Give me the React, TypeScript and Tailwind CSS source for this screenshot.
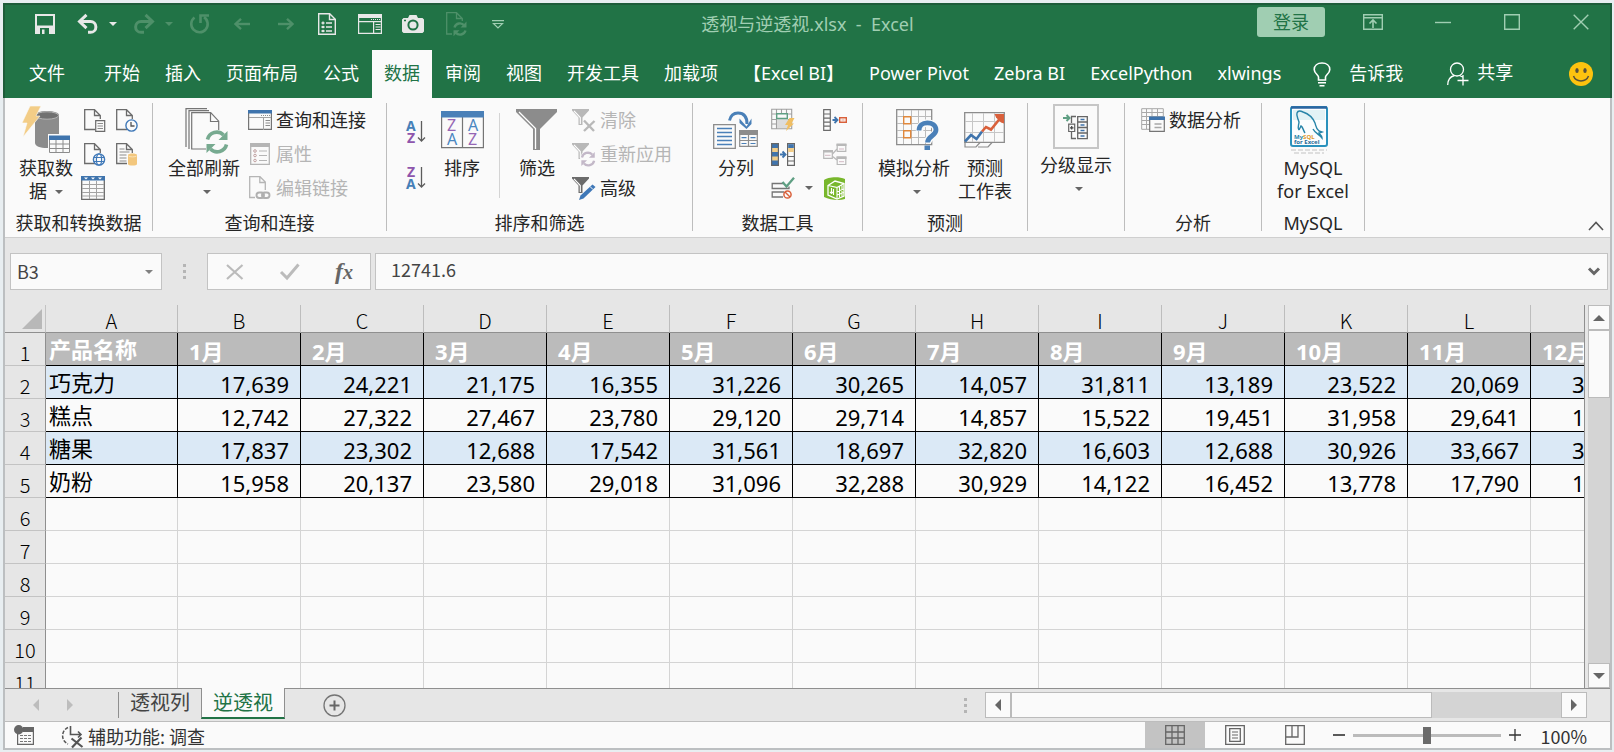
import React from 'react'

const TABS = [
  '文件', '开始', '插入', '页面布局', '公式', '数据', '审阅', '视图', '开发工具', '加载项',
  '【Excel BI】', 'Power Pivot', 'Zebra BI', 'ExcelPython', 'xlwings',
]

const COLUMNS = ['A', 'B', 'C', 'D', 'E', 'F', 'G', 'H', 'I', 'J', 'K', 'L', 'M']
const MONTHS = ['1月', '2月', '3月', '4月', '5月', '6月', '7月', '8月', '9月', '10月', '11月', '12月']

const PRODUCTS = [
  { name: '巧克力', values: ['17,639', '24,221', '21,175', '16,355', '31,226', '30,265', '14,057', '31,811', '13,189', '23,522', '20,069'], last: '3' },
  { name: '糕点', values: ['12,742', '27,322', '27,467', '23,780', '29,120', '29,714', '14,857', '15,522', '19,451', '31,958', '29,641'], last: '1' },
  { name: '糖果', values: ['17,837', '23,302', '12,688', '17,542', '31,561', '18,697', '32,820', '16,603', '12,688', '30,926', '33,667'], last: '3' },
  { name: '奶粉', values: ['15,958', '20,137', '23,580', '29,018', '31,096', '32,288', '30,929', '14,122', '16,452', '13,778', '17,790'], last: '1' },
]

const EMPTY_ROWS = [6, 7, 8, 9, 10, 11]

interface IconProps {
  w: number
  h: number
  className?: string
  children: React.ReactNode
}

function Icon({ w, h, className, children }: IconProps) {
  return (
    <svg width={w} height={h} viewBox={`0 0 ${w} ${h}`} fill="none" className={`shrink-0 overflow-visible ${className || ''}`} aria-hidden="true">
      {children}
    </svg>
  )
}

function Caret({ className = 'text-[#666]' }: { className?: string }) {
  return (
    <Icon w={8} h={4} className={className}>
      <path d="M0 0h8L4 4z" fill="currentColor" />
    </Icon>
  )
}

/* ---------- title bar icons ---------- */

const SaveIcon = () => (
  <Icon w={20} h={20}>
    <path d="M0 0h20v20H0z M2 2v9.500h16V2z" fill="currentColor" fillRule="evenodd" />
    <path d="M5 14h9v6H5z" fill="#217346" />
    <path d="M7 15.500h2.500V20H7z" fill="currentColor" />
  </Icon>
)

const UndoIcon = () => (
  <Icon w={22} h={20}>
    <path d="M2 7.500h11.500a5.300 5.300 0 0 1 0 10.800H11" stroke="currentColor" strokeWidth="3" />
    <path d="M9.500 .8L2.500 7.500l7 6.700" stroke="currentColor" strokeWidth="3" />
  </Icon>
)

const RedoIcon = () => (
  <Icon w={22} h={20}>
    <path d="M20 7.500H8a5.300 5.300 0 0 0 0 10.800h3" stroke="currentColor" strokeWidth="3" />
    <path d="M12.500 .8l7 6.700-7 6.700" stroke="currentColor" strokeWidth="3" />
  </Icon>
)

const RepeatIcon = () => (
  <Icon w={21} h={20}>
    <path d="M5.500 3.500A8.200 8.200 0 1 0 15 3.200" stroke="currentColor" strokeWidth="2.600" />
    <path d="M11.500 9V1.500H20" stroke="currentColor" strokeWidth="2.600" />
  </Icon>
)

const ArrowIcon = ({ flip }: { flip?: boolean }) => (
  <Icon w={16} h={12} className={flip ? 'rotate-180' : ''}>
    <path d="M2 6h14" stroke="currentColor" strokeWidth="2.400" />
    <path d="M7 .8L1.500 6 7 11.200" stroke="currentColor" strokeWidth="2.400" />
  </Icon>
)

const ListDocIcon = () => (
  <Icon w={18} h={22}>
    <path d="M.7 .7h11l5.600 5.600v15H.7z M11.500 1v5.500H17" stroke="currentColor" strokeWidth="1.400" />
    <path d="M3.500 10h3M5 8.500v3M3.500 14h3M3.500 18h3M8 10h6M8 14h6M8 18h6" stroke="currentColor" strokeWidth="1.300" />
    <path d="M5 12.500l1.500 1.500L5 15.500 3.500 14zM5 16.500L6.500 18 5 19.500 3.500 18z" fill="currentColor" />
  </Icon>
)

const PaneTitleIcon = () => (
  <Icon w={24} h={20}>
    <path d="M.6 .6h22.800v18.800H.6z" stroke="currentColor" strokeWidth="1.200" />
    <path d="M0 0h24v4H0zM1 7h22v1.200H1zM15 8h1.200v12H15z" fill="currentColor" />
    <path d="M13 5.500h9" stroke="currentColor" strokeWidth="1.200" strokeDasharray="1 1" />
    <path d="M17.500 10.500h5M17.500 13h5M17.500 15.500h5" stroke="currentColor" strokeWidth="1.200" />
  </Icon>
)

const CameraIcon = () => (
  <Icon w={22} h={18}>
    <path d="M1.500 3H6l1.500-3h7L16 3h4.500L22 4.500v12L20.500 18h-19L0 16.500v-12z" fill="currentColor" />
    <circle cx="11" cy="10" r="4.600" stroke="#217346" strokeWidth="2" />
    <path d="M2 5.500h2" stroke="#217346" strokeWidth="1.500" />
  </Icon>
)

const RefreshDocIcon = () => (
  <Icon w={22} h={24}>
    <path d="M6 22H.7V.7h9.800l5.800 5.800V9M10.500 1v5.500H16" stroke="currentColor" strokeWidth="1.300" />
    <path d="M8.500 15.500a5.600 5.600 0 0 1 9.800-2M19.500 18.500a5.600 5.600 0 0 1-9.800 2" stroke="currentColor" strokeWidth="2.400" />
    <path d="M20.500 9.500v6h-6zM7.500 24.200v-6h6z" fill="currentColor" />
  </Icon>
)

const CustomizeIcon = () => (
  <Icon w={12} h={9}>
    <path d="M0 .7h12M1.500 3.500h9L6 8z" stroke="currentColor" strokeWidth="1.200" />
  </Icon>
)

const RibbonDisplayIcon = () => (
  <Icon w={20} h={16}>
    <path d="M.7 .7h18.600v14.600H.7zM1 3.700h18" stroke="currentColor" strokeWidth="1.400" />
    <path d="M10 14V6.500M6.500 9.500L10 6l3.500 3.500" stroke="currentColor" strokeWidth="1.600" />
  </Icon>
)

/* ---------- ribbon icons ---------- */

const GetDataIcon = () => (
  <Icon w={48} h={48}>
    <path d="M13 9c0-2.300 5-4 12-4s12 1.700 12 4v28c0 3-5 5-12 5s-12-2-12-5z" fill="#8c8c8c" />
    <ellipse cx="25" cy="9.500" rx="11.500" ry="3.700" fill="#717171" stroke="#b3b3b3" />
    <path d="M8 0h11l-5 10h4L1 31l4-14H0z" fill="#f3cd87" stroke="#fafafa" strokeWidth=".6" />
    <path d="M26 28h23v21H26z" fill="#fafafa" />
    <path d="M27.500 33.500h20v13h-20zM27.500 38h20M27.500 42.500h20M34 33v14M41 33v14" stroke="#8c8c8c" />
    <path d="M27 29.500h21v4.500H27z" fill="#3f74ad" />
  </Icon>
)

const DocBase = () => (
  <path d="M11 20.500H.7V.7h9.800l5.800 5.800V10M10.500 1v5.500H16" stroke="#6b6b6b" strokeWidth="1.300" />
)

const TextDocIcon = () => (
  <Icon w={22} h={23}>
    <DocBase />
    <path d="M11.700 11.700h9v10.600h-9z" fill="#fafafa" stroke="#6b6b6b" strokeWidth="1.200" />
    <path d="M13.500 14.500h5.500M13.500 17h5.500M13.500 19.500h5.500" stroke="#8c8c8c" />
  </Icon>
)

const RecentDocIcon = () => (
  <Icon w={22} h={23}>
    <DocBase />
    <circle cx="15.500" cy="16.500" r="5.600" fill="#fafafa" stroke="#3f78b8" strokeWidth="1.400" />
    <path d="M15 13v4h3.500" stroke="#555" strokeWidth="1.300" />
  </Icon>
)

const WebDocIcon = () => (
  <Icon w={22} h={23}>
    <DocBase />
    <circle cx="15" cy="16.500" r="5.600" fill="#fafafa" stroke="#3f78b8" strokeWidth="1.400" />
    <ellipse cx="15" cy="16.500" rx="2.600" ry="5.600" stroke="#3f78b8" strokeWidth="1.200" />
    <path d="M10 14.500h10M10 18.500h10" stroke="#3f78b8" strokeWidth="1.200" />
  </Icon>
)

const SourceDocIcon = () => (
  <Icon w={22} h={23}>
    <DocBase />
    <path d="M3.500 6h5M3.500 9h10M3.500 12h7M3.500 15h7M3.500 18h7" stroke="#8c8c8c" />
    <path d="M12 12c0-2 9-2 9 0v9c0 2-9 2-9 0z" fill="#f3c77d" />
    <path d="M12.500 13c1 1.200 7 1.200 8 0" stroke="#fbe3b8" />
  </Icon>
)

const TableIcon = () => (
  <Icon w={24} h={24}>
    <path d="M.7 .7h22.600v22.600H.7z" fill="#fafafa" stroke="#6b6b6b" strokeWidth="1.300" />
    <path d="M1 8.500h22M1 12.500h22M1 16.500h22M1 20h22M8.500 5v18M15.500 5v18" stroke="#a3a3a3" />
    <path d="M0 0h24v4.500H0z" fill="#3f74ad" />
    <path d="M3 1.500h4L5 3.500zM10 1.500h4l-2 2zM17 1.500h4l-2 2z" fill="#fff" />
  </Icon>
)

const RefreshArrows = ({ color }: { color: string }) => (
  <>
    <path d="M1.500 8.500a9.500 9.500 0 0 1 16-4.500M20.500 13.500a9.500 9.500 0 0 1-16 4.500" stroke={color} strokeWidth="3.600" />
    <path d="M21.500 0v9h-9zM.5 22v-9h9z" fill={color} />
  </>
)

const RefreshAllIcon = () => (
  <Icon w={44} h={45}>
    <path d="M1 39V.7h21M4 41V2.700h20" stroke="#757575" strokeWidth="1.200" />
    <path d="M6.700 4.700h19l8 8.500V41h-27z" fill="#fafafa" stroke="#757575" strokeWidth="1.200" />
    <path d="M25.500 5v8.500H34" stroke="#757575" strokeWidth="1.200" />
    <path d="M21 22h23v23H21z" fill="#fafafa" />
    <g transform="translate(21 23)">
      <RefreshArrows color="#77aa90" />
    </g>
  </Icon>
)

const QueriesIcon = () => (
  <Icon w={24} h={20}>
    <path d="M.6 .6h22.800v18.800H.6z" stroke="#757575" strokeWidth="1.200" />
    <path d="M0 0h24v3.500H0z" fill="#3f74ad" />
    <path d="M1 7.500h22M15.500 8v12" stroke="#a3a3a3" />
    <path d="M13 5.500h9" stroke="#8c8c8c" strokeDasharray="1 1" />
    <path d="M17.500 10.500h4.500M17.500 13h4.500M17.500 15.500h4.500" stroke="#8c8c8c" />
  </Icon>
)

const PropertiesIcon = () => (
  <Icon w={20} h={22}>
    <path d="M.7 .7h18.600v20.600H.7z" stroke="#b5b5b5" strokeWidth="1.300" />
    <path d="M0 0h20v4H0z" fill="#b5b5b5" />
    <path d="M9 8h8M9 12.500h8M9 17.500h8" stroke="#b5b5b5" strokeWidth="1.200" />
    <circle cx="5" cy="8" r="1.300" stroke="#c0a0a0" />
    <circle cx="5" cy="12.500" r="1.300" stroke="#c0a0a0" />
    <circle cx="5" cy="17.500" r="1.300" stroke="#c0a0a0" />
  </Icon>
)

const EditLinksIcon = () => (
  <Icon w={22} h={24}>
    <path d="M6 21.500H.7V.7h10.300l5.300 5.300V14M10.800 1v5.500H16" stroke="#b5b5b5" strokeWidth="1.300" />
    <rect x="7.500" y="16.500" width="7.500" height="5.500" rx="2.700" stroke="#b0b0b0" strokeWidth="1.900" />
    <rect x="13" y="16.500" width="7.500" height="5.500" rx="2.700" stroke="#b0b0b0" strokeWidth="1.900" />
  </Icon>
)

const SortArrow = () => <path d="M15.500 1v20M12 17.500l3.500 3.500 3.500-3.500" stroke="#5c5c5c" strokeWidth="1.300" />

const SortAscIcon = () => (
  <Icon w={20} h={24}>
    <text x="0" y="11" fontSize="14" fontWeight="700" fill="#4580b8">A</text>
    <text x="1" y="23" fontSize="14" fontWeight="700" fill="#8e55ac">Z</text>
    <SortArrow />
  </Icon>
)

const SortDescIcon = () => (
  <Icon w={20} h={24}>
    <text x="1" y="11" fontSize="14" fontWeight="700" fill="#8e55ac">Z</text>
    <text x="0" y="23" fontSize="14" fontWeight="700" fill="#4580b8">A</text>
    <SortArrow />
  </Icon>
)

const SortIcon = () => (
  <Icon w={43} h={38}>
    <path d="M.6 4.600h41.800v32H.6zM21.500 6v31" stroke="#757575" strokeWidth="1.200" />
    <path d="M0 0h43v6.500H0z" fill="#4a80b8" />
    <text x="6" y="20" fontSize="16" fill="#9566b4">Z</text>
    <text x="6" y="33.500" fontSize="16" fill="#4a86c0">A</text>
    <text x="27" y="20" fontSize="16" fill="#4a86c0">A</text>
    <text x="27" y="33.500" fontSize="16" fill="#9566b4">Z</text>
  </Icon>
)

const FilterIcon = () => (
  <Icon w={42} h={42}>
    <path d="M0 0h41v3L24 20v21h-7V20L0 3z" fill="#8c8c8c" />
    <path d="M3 3l16.500 16.500V40" stroke="#fff" strokeWidth="1.300" />
  </Icon>
)

const SmallFunnel = ({ color }: { color: string }) => (
  <>
    <path d="M0 0h17v1.500L10.500 8.500V16h-4V8.500L0 1.500z" fill={color} />
    <path d="M2 1.800l6.300 6.700V15" stroke="#fff" strokeWidth="1.100" />
  </>
)

const ClearFilterIcon = () => (
  <Icon w={24} h={23}>
    <SmallFunnel color="#b8b8b8" />
    <path d="M12 11.500l10 10.500M22.500 12L12 22" stroke="#b8b8b8" strokeWidth="2.400" />
  </Icon>
)

const ReapplyIcon = () => (
  <Icon w={24} h={23}>
    <SmallFunnel color="#b8b8b8" />
    <circle cx="16" cy="16" r="8" fill="#fafafa" />
    <g transform="translate(9 9) scale(.64)">
      <RefreshArrows color="#c3b8c8" />
    </g>
  </Icon>
)

const AdvancedFilterIcon = () => (
  <Icon w={24} h={23}>
    <SmallFunnel color="#6b6b6b" />
    <path d="M20.500 7.500l3 2.500-12 11.500-4.500 1.500 1.500-4.500z" fill="#3f78b8" />
    <path d="M18 9.500l3 3" stroke="#fafafa" />
  </Icon>
)

const TextToColumnsIcon = () => (
  <Icon w={46} h={38}>
    <path d="M.7 13.700h21.600v23.600H.7z" stroke="#8c8c8c" strokeWidth="1.300" />
    <path d="M4 17.500h15M4 21.500h15M4 25.500h15M4 29.500h15M4 33.500h15" stroke="#4a80b8" strokeWidth="1.300" />
    <path d="M26.700 20h17.600v15.300H26.700zM35.500 24v12M27 29.500h17" stroke="#8c8c8c" strokeWidth="1.200" />
    <path d="M26 19h19v5H26z" fill="#8c8c8c" />
    <path d="M28.500 26.700h5M37.500 26.700h5M28.500 32.500h5M37.500 32.500h5" stroke="#4a80b8" strokeWidth="1.200" />
    <path d="M16.500 9.500C18 3 22 2 25 2c6 0 9 4 9 11" stroke="#4a80b8" strokeWidth="3" />
    <path d="M26.500 7.500l7 8 5-8v5.500l-5 5-7-6z" fill="#4a80b8" />
  </Icon>
)

const FlashFillIcon = () => (
  <Icon w={24} h={24}>
    <path d="M.7 1.200h20v19.600H.7zM5.500 1v20M10.500 1v5M15.500 1v5M1 6h20M1 11.500h20M1 16h12" stroke="#a0a0a0" strokeWidth="1.100" />
    <path d="M6 11h11v9H6z" fill="#dcdcdc" />
    <path d="M5.700 5.700h10.600v4.800H5.700z" fill="#fafafa" stroke="#5f9f83" strokeWidth="1.400" />
    <path d="M18.500 10h5l-3 5.500h2.500L15 23l2-6h-3z" fill="#f0be62" />
  </Icon>
)

const RemoveDuplicatesIcon = () => (
  <Icon w={24} h={23}>
    <path d="M.6 .6h6.800v21.800H.6z" fill="#3f74ad" stroke="#666" strokeWidth="1.200" />
    <path d="M1.200 5h5.600v4H1.200zM1.200 13.500h5.600v4H1.200z" fill="#f3cd87" />
    <path d="M16.600 .6h6.800v21.800h-6.800zM17 13.500h6M17 18h6" fill="#fafafa" stroke="#666" strokeWidth="1.200" />
    <path d="M17.200 1.200h5.600V5h-5.600z" fill="#3f74ad" />
    <path d="M17.200 5h5.600v4h-5.600z" fill="#f3cd87" />
    <path d="M9 11.500h5M11.500 8.500l3 3-3 3" stroke="#3f74ad" strokeWidth="1.900" />
  </Icon>
)

const ValidationIcon = () => (
  <Icon w={24} h={22}>
    <path d="M12 6.500H1.200v5H18v-2M13 15H1.200v5H12" stroke="#757575" strokeWidth="1.300" />
    <path d="M11.500 5l4 4.500L23 .8" stroke="#5f9f83" strokeWidth="2.300" />
    <circle cx="16.500" cy="17.500" r="3.600" stroke="#d9603b" strokeWidth="1.500" />
    <path d="M14 15l5 5" stroke="#d9603b" strokeWidth="1.400" />
  </Icon>
)

const ConsolidateIcon = () => (
  <Icon w={24} h={22}>
    <path d="M.7 .7h6.600v20.600H.7zM1 5h6M1 9.200h6M1 13.200h6M1 17.200h6" stroke="#6b6b6b" strokeWidth="1.200" />
    <path d="M9.500 11h4.500M11.500 8l3 3-3 3" stroke="#3f74ad" strokeWidth="1.800" />
    <path d="M16.700 8.700h6.600v4.600h-6.600z" stroke="#d9603b" strokeWidth="1.400" />
    <path d="M18.500 11h3" stroke="#e3a08a" />
  </Icon>
)

const RelationshipsIcon = () => (
  <Icon w={24} h={23}>
    <path d="M9 11.500l5-5.500M9 13l5 4" stroke="#b8b8b8" strokeWidth="1.200" />
    <path d="M.7 8h8.600v7.300H.7zM14.200 1.500h8.600v6.800h-8.600zM14.200 14.200h8.600v7.300h-8.600z" fill="#fafafa" stroke="#b8b8b8" strokeWidth="1.200" />
    <path d="M0 7h10v2.500H0zM13.500 .5h10V3h-10zM13.500 13.500h10V16h-10z" fill="#b8b8b8" />
    <path d="M2 12.300h5.500M16 6h5M16 18.700h5" stroke="#d3b9c4" />
  </Icon>
)

const DataModelIcon = () => (
  <Icon w={22} h={23}>
    <path d="M0 3c3-3 15-4 21-1v20c-6 2-15 1-21-2z" fill="#78b72c" />
    <path d="M4 8.500l7-4.500 9 2.500v12.500l-7 3-9-4z" stroke="#fff" strokeWidth="1.300" />
    <path d="M4 8.500l9 2V22M13 10.500l7-4M15.500 9.500v11M18 8.500v11M13 14.500l7-2.500M13 18l7-2.500" stroke="#fff" strokeWidth="1.100" />
    <path d="M6 15l1.500 1.500L9 15M7.500 11v5M9.500 12v6" stroke="#fff" strokeWidth="1.100" />
  </Icon>
)

const WhatIfIcon = () => (
  <Icon w={43} h={42}>
    <path d="M.7 .7h35v35H.7z" stroke="#8c8c8c" strokeWidth="1.300" />
    <path d="M7.500 1v34M15.500 1v34M22.500 1v34M29.500 1v34M1 7.500h34M1 14.500h34M1 21.500h34M1 28.500h34" stroke="#bcbcbc" />
    <path d="M7.700 7.700h7v7h-7zM7.700 21.700h7v7h-7z" fill="#fafafa" stroke="#e0883c" strokeWidth="1.400" />
    <path d="M23.500 22c0-5.500 3.500-8 8-8s8.500 2.500 8.500 7c0 6-8.500 6.500-8.500 13" stroke="#fafafa" strokeWidth="7.500" />
    <path d="M23 21.500c0-5 3.500-7.700 8.300-7.700S40 16.500 40 21c0 6-8.500 6-8.500 12.500" stroke="#4a80b8" strokeWidth="4.800" />
    <path d="M28.500 36.500h5.500v4.500h-5.500z" fill="#4a80b8" />
  </Icon>
)

const ForecastIcon = () => (
  <Icon w={42} h={36}>
    <path d="M.7 .7h39.600v29.600H.7z" stroke="#8c8c8c" strokeWidth="1.300" />
    <path d="M8.500 1v29M19.500 1v29M30.500 1v29M1 9.500h39M1 20.500h39" stroke="#c6c6c6" />
    <path d="M1 30.500V35h11l4-4.500M14 35h10l4-4.500" stroke="#8c8c8c" strokeWidth="1.200" />
    <path d="M1 29.500l6-6.500 5.500 4L18 19.500" stroke="#3f74ad" strokeWidth="2.600" />
    <path d="M18 19.500l4-4.500 5 2.500L38 4" stroke="#d9603b" strokeWidth="2.600" />
    <path d="M30.500 2H40v9.500l-3-1-5-5z" fill="#d9603b" />
  </Icon>
)

const OutlineIcon = () => (
  <Icon w={26} h={26}>
    <path d="M14.700 2.700h9.600v22h-9.600zM15 8h9M15 13.500h9M15 19h9" stroke="#666" strokeWidth="1.300" />
    <path d="M17.500 5.500h4M17.500 11h4M17.500 16.500h4M17.500 22h4" stroke="#3f74ad" strokeWidth="1.300" />
    <path d="M13 2.500H8.500V9M13 24.500H8.500V18" stroke="#666" strokeWidth="1.300" />
    <path d="M5.700 10.200h6v7.300h-6z" stroke="#666" strokeWidth="1.200" />
    <path d="M7 13.800h3.500M8.700 12v3.500" stroke="#444" strokeWidth="1.200" />
    <path d="M0 4h5.500M3.500 1L6.500 4l-3 3" stroke="#5f9f83" strokeWidth="2" />
  </Icon>
)

const AnalysisIcon = () => (
  <Icon w={24} h={24}>
    <path d="M.7 .7h21.600v20.600H.7zM5.500 1v20M11 1v20M16.500 1v20M1 4.500h21M1 8.500h21M1 12.500h21M1 16.500h21" stroke="#a8a8a8" />
    <path d="M8.700 9.700h14.600v13.600H8.700z" fill="#fafafa" stroke="#757575" strokeWidth="1.200" />
    <path d="M8 8.500h16V12H8z" fill="#3f74ad" />
    <path d="M13.500 16h7M13.500 19.500h7" stroke="#a8a8a8" strokeWidth="1.300" />
  </Icon>
)

const MySqlIcon = () => (
  <Icon w={38} h={48} className="mr-2">
    <path d="M1 44h36M4 47h30" stroke="#dedede" strokeWidth="2" strokeDasharray="5 2" />
    <rect x="1" y="1" width="36" height="39" rx="2" fill="#fbfdfe" stroke="#2a92bd" strokeWidth="2" />
    <path d="M1 1.500h36" stroke="#2c65a0" strokeWidth="2.400" />
    <path d="M3 4h32v10H3z" fill="#e2f2f5" />
    <path d="M9 24c-2-3 0-5 0-8-1-4-3-6-2-9 1-3 4-2 6-1 6 2 10 6 12 11 1 3 1 6 4 8l3 1-3 1c1 2 3 2 3 5-3-4-7-5-9-9" stroke="#2784a8" strokeWidth="1.400" />
    <path d="M9 24l2-4c2 1 2 4 4 7" stroke="#2784a8" strokeWidth="1.400" />
    <text x="4" y="33" fontSize="6" fontWeight="700" fill="#2784a8">My<tspan fill="#e0962e">SQL</tspan></text>
    <text x="4" y="38" fontSize="6" fontWeight="700" fill="#1f6a97">for Excel</text>
  </Icon>
)

/* ---------- ribbon building blocks ---------- */

interface GroupProps {
  label?: string
  className?: string
  children: React.ReactNode
}

function RibbonGroup({ label, className, children }: GroupProps) {
  return (
    <section className={`flex shrink-0 flex-col border-r border-[#bdbdbd] ${className || ''}`}>
      <div className="flex h-[112px] items-start">{children}</div>
      <div className="h-4 text-center leading-4">{label}</div>
    </section>
  )
}

interface BigButtonProps {
  icon: React.ReactNode
  lines: string[]
  caret?: boolean
  className?: string
}

function BigButton({ icon, lines, caret, className }: BigButtonProps) {
  const inline = caret && lines.length > 1
  return (
    <button type="button" className={`flex shrink-0 flex-col items-center leading-[23px] ${className || ''}`}>
      <span className={`flex h-[54px] items-center justify-center ${caret && !inline ? 'pl-1.5' : ''}`}>{icon}</span>
      {lines.map((line, i) => (
        <span key={line} className="flex items-center gap-2 whitespace-nowrap">
          {line}
          {inline && i === lines.length - 1 && <Caret />}
        </span>
      ))}
      {caret && !inline && <span className="flex h-6 items-center pl-1.5"><Caret /></span>}
    </button>
  )
}

interface SmallButtonProps {
  icon: React.ReactNode
  label: string
  disabled?: boolean
}

function SmallButton({ icon, label, disabled }: SmallButtonProps) {
  return (
    <button type="button" disabled={disabled} className="flex h-[34px] items-center gap-1 whitespace-nowrap disabled:text-[#b5b5b5]">
      <span className="flex w-6 justify-center">{icon}</span>
      {label}
    </button>
  )
}

function IconButton({ label, children, className }: { label: string; children: React.ReactNode; className?: string }) {
  return (
    <button type="button" aria-label={label} className={`flex shrink-0 items-center justify-center ${className || ''}`}>
      {children}
    </button>
  )
}

/* ---------- page sections ---------- */

function TitleBar() {
  return (
    <div className="grid h-[45px] grid-cols-[1fr_auto_1fr] text-[#a0ceb2]">
      <div className="flex h-[38px] items-center pl-[30px] text-[#e8e8e8]">
        <IconButton label="保存"><SaveIcon /></IconButton>
        <IconButton label="撤消" className="ml-[22px]"><UndoIcon /></IconButton>
        <IconButton label="撤消列表" className="ml-2.5"><Caret className="text-[#e8e8e8]" /></IconButton>
        <div className="flex items-center text-[#4e9069]">
          <IconButton label="恢复" className="ml-4"><RedoIcon /></IconButton>
          <IconButton label="恢复列表" className="ml-2.5"><Caret className="text-[#4e9069]" /></IconButton>
          <IconButton label="重复" className="ml-4"><RepeatIcon /></IconButton>
          <IconButton label="后退" className="ml-6"><ArrowIcon /></IconButton>
          <IconButton label="前进" className="ml-7"><ArrowIcon flip /></IconButton>
        </div>
        <IconButton label="列表" className="ml-6"><ListDocIcon /></IconButton>
        <IconButton label="窗格" className="ml-[22px]"><PaneTitleIcon /></IconButton>
        <IconButton label="照相机" className="ml-5"><CameraIcon /></IconButton>
        <IconButton label="刷新" className="ml-[22px] text-[#4e9069]"><RefreshDocIcon /></IconButton>
        <IconButton label="自定义快速访问工具栏" className="ml-6 text-[#a0ceb2]"><CustomizeIcon /></IconButton>
      </div>
      <h1 className="flex h-[38px] items-center whitespace-pre">{'透视与逆透视.xlsx  -  Excel'}</h1>
      <div className="flex h-[34px] items-center justify-end pr-[21px]">
        <button type="button" className="h-[30px] w-[68px] rounded-[3px] bg-[#a0ceb2] text-[#217346]">登录</button>
        <IconButton label="功能区显示选项" className="ml-[38px]"><RibbonDisplayIcon /></IconButton>
        <IconButton label="最小化" className="ml-[52px]">
          <Icon w={16} h={16}><path d="M0 8.500h16" stroke="currentColor" strokeWidth="1.400" /></Icon>
        </IconButton>
        <IconButton label="最大化" className="ml-[53px]">
          <Icon w={16} h={16}><path d="M.7 .7h14.600v14.600H.7z" stroke="currentColor" strokeWidth="1.400" /></Icon>
        </IconButton>
        <IconButton label="关闭" className="ml-[53px]">
          <Icon w={16} h={16}><path d="M.7 .7l14.600 14.600M15.300 .7L.7 15.300" stroke="currentColor" strokeWidth="1.400" /></Icon>
        </IconButton>
      </div>
    </div>
  )
}

function TabBar() {
  return (
    <nav className="flex h-12 items-stretch whitespace-nowrap pl-3 leading-6 text-white">
      <div className="flex gap-px">
        {TABS.map((tab) => (
          <button
            key={tab}
            type="button"
            className={`px-3 pb-0.5 ${tab === '文件' ? 'mr-3.5' : ''} ${tab === '数据' ? 'bg-[#fafafa] text-[#217346]' : ''}`}
          >
            {tab}
          </button>
        ))}
      </div>
      <button type="button" className="ml-5 flex items-center gap-[18px]">
        <Icon w={18} h={25}>
          <path d="M5.500 18v-3c0-2-4.300-3.500-4.300-7.500C1.200 3.500 4.500 1 9 1s7.800 2.500 7.800 6.500c0 4-4.300 5.500-4.300 7.500v3z" stroke="currentColor" strokeWidth="1.600" />
          <path d="M5 20.800h8M6.500 23.800h5" stroke="currentColor" strokeWidth="1.600" />
        </Icon>
        <span className="pb-0.5">告诉我</span>
      </button>
      <button type="button" className="ml-11 flex items-center gap-2">
        <Icon w={22} h={24}>
          <circle cx="10" cy="7.500" r="6.500" stroke="currentColor" strokeWidth="1.300" />
          <path d="M.7 23c0-5 3-8.500 6.800-9.500M12.500 13.500l3 1.500M16 13v10.500M10.500 18.500h11" stroke="currentColor" strokeWidth="1.300" />
        </Icon>
        <span className="pb-1">共享</span>
      </button>
      <IconButton label="反馈" className="mr-[17px] ml-auto">
        <Icon w={24} h={24}>
          <circle cx="12" cy="12" r="12" fill="#fdc30f" />
          <ellipse cx="8" cy="8.500" rx="1.700" ry="2.500" fill="#57503a" />
          <ellipse cx="16" cy="8.500" rx="1.700" ry="2.500" fill="#57503a" />
          <path d="M4.500 14c2.500 6.500 12.500 6.500 15 0" stroke="#57503a" strokeWidth="1.500" />
        </Icon>
      </IconButton>
    </nav>
  )
}

function Ribbon() {
  return (
    <div className="flex border-b border-[#cfcfcf] bg-[#fafafa] pt-[5px] pb-1.5 text-[#262626]">
      <RibbonGroup label="获取和转换数据" className="w-[148px]">
        <BigButton icon={<GetDataIcon />} lines={['获取数', '据']} caret className="ml-2 w-[66px]" />
        <div className="grid grid-cols-2 grid-rows-3">
          <IconButton label="从文本/CSV" className="h-[34px] w-8"><TextDocIcon /></IconButton>
          <IconButton label="最近使用的源" className="h-[34px] w-8"><RecentDocIcon /></IconButton>
          <IconButton label="自网站" className="h-[34px] w-8"><WebDocIcon /></IconButton>
          <IconButton label="现有连接" className="h-[34px] w-8"><SourceDocIcon /></IconButton>
          <IconButton label="自表格/区域" className="h-[34px] w-7"><TableIcon /></IconButton>
        </div>
      </RibbonGroup>

      <RibbonGroup label="查询和连接" className="w-[234px]">
        <BigButton icon={<RefreshAllIcon />} lines={['全部刷新']} caret className="ml-[11px] w-20" />
        <div className="ml-1 flex flex-col">
          <SmallButton icon={<QueriesIcon />} label="查询和连接" />
          <SmallButton icon={<PropertiesIcon />} label="属性" disabled />
          <SmallButton icon={<EditLinksIcon />} label="编辑链接" disabled />
        </div>
      </RibbonGroup>

      <RibbonGroup label="排序和筛选" className="w-[306px]">
        <div className="ml-[17px] flex flex-col pt-1.5">
          <IconButton label="升序" className="h-[46px] w-6"><SortAscIcon /></IconButton>
          <IconButton label="降序" className="h-[46px] w-6"><SortDescIcon /></IconButton>
        </div>
        <BigButton icon={<SortIcon />} lines={['排序']} className="ml-[11px] w-[46px]" />
        <div className="mt-2.5 ml-3.5 h-[85px] w-px bg-[#d4d4d4]" />
        <BigButton icon={<FilterIcon />} lines={['筛选']} className="ml-3.5 w-[46px]" />
        <div className="ml-3 flex flex-col">
          <SmallButton icon={<ClearFilterIcon />} label="清除" disabled />
          <SmallButton icon={<ReapplyIcon />} label="重新应用" disabled />
          <SmallButton icon={<AdvancedFilterIcon />} label="高级" />
        </div>
      </RibbonGroup>

      <RibbonGroup label="数据工具" className="w-[170px]">
        <BigButton icon={<TextToColumnsIcon />} lines={['分列']} className="ml-5 w-[46px]" />
        <div className="ml-3 flex flex-col">
          <IconButton label="快速填充" className="h-[34px] w-6"><FlashFillIcon /></IconButton>
          <IconButton label="删除重复值" className="h-[34px] w-6"><RemoveDuplicatesIcon /></IconButton>
          <IconButton label="数据验证" className="h-[34px] w-6"><ValidationIcon /></IconButton>
        </div>
        <IconButton label="数据验证选项" className="mt-[68px] ml-1.5 h-[34px] w-4"><Caret /></IconButton>
        <div className="ml-1.5 flex flex-col">
          <IconButton label="合并计算" className="h-[34px] w-6"><ConsolidateIcon /></IconButton>
          <IconButton label="关系" className="h-[34px] w-6"><RelationshipsIcon /></IconButton>
          <IconButton label="管理数据模型" className="h-[34px] w-6"><DataModelIcon /></IconButton>
        </div>
      </RibbonGroup>

      <RibbonGroup label="预测" className="w-[165px]">
        <BigButton icon={<WhatIfIcon />} lines={['模拟分析']} caret className="ml-[11px] w-20" />
        <BigButton icon={<ForecastIcon />} lines={['预测', '工作表']} className="ml-1 w-[54px]" />
      </RibbonGroup>

      <RibbonGroup className="w-[97px]">
        <button type="button" className="mx-auto flex flex-col items-center leading-[23px]">
          <span className="mt-px mb-[5px] flex h-[45px] w-[46px] items-center justify-center border-2 border-[#c6c6c6]">
            <OutlineIcon />
          </span>
          分级显示
          <span className="flex h-6 items-center pl-1.5"><Caret /></span>
        </button>
      </RibbonGroup>

      <RibbonGroup label="分析" className="w-[137px]">
        <div className="ml-4">
          <SmallButton icon={<AnalysisIcon />} label="数据分析" />
        </div>
      </RibbonGroup>

      <RibbonGroup label="MySQL" className="w-[103px]">
        <BigButton icon={<MySqlIcon />} lines={['MySQL', 'for Excel']} className="mx-auto" />
      </RibbonGroup>

      <IconButton label="折叠功能区" className="mt-auto mr-1.5 ml-auto">
        <Icon w={16} h={10}><path d="M1 9l7-7.500L15 9" stroke="#555" strokeWidth="1.600" /></Icon>
      </IconButton>
    </div>
  )
}

const Dots = () => (
  <span className="flex w-[3px] flex-col gap-[3px]">
    <span className="h-[3px] bg-[#b5b5b5]" />
    <span className="h-[3px] bg-[#b5b5b5]" />
    <span className="h-[3px] bg-[#b5b5b5]" />
  </span>
)

function FormulaBar() {
  return (
    <div className="flex items-center py-[15px] pr-0.5 pl-[5px] font-['Noto_Sans_CJK_SC',sans-serif] text-[#444]">
      <div className="flex h-[37px] w-[152px] items-center border border-[#c3c3c3] bg-[#fafafa] pr-2">
        <input aria-label="名称框" defaultValue="B3" className="min-w-0 flex-1 bg-transparent pb-0.5 pl-1.5 outline-none" />
        <IconButton label="名称列表"><Caret className="text-[#808080]" /></IconButton>
      </div>
      <div className="flex w-[45px] justify-center"><Dots /></div>
      <div className="flex h-[37px] w-[164px] items-center border border-[#c3c3c3] bg-[#fafafa] pl-[18px]">
        <IconButton label="取消">
          <Icon w={18} h={16}><path d="M1 1l15.500 14M16.500 1L1 15" stroke="#bbb" strokeWidth="2.200" /></Icon>
        </IconButton>
        <IconButton label="输入" className="ml-9">
          <Icon w={20} h={17}><path d="M1 9l6 6L18.500 1.500" stroke="#bbb" strokeWidth="3" /></Icon>
        </IconButton>
        <button type="button" aria-label="插入函数" className="ml-[35px] font-['Liberation_Serif',serif] text-2xl leading-6 font-bold text-[#666] italic">
          f<span className="text-xl">x</span>
        </button>
      </div>
      <div className="ml-1 flex h-[37px] flex-1 items-center border border-[#c3c3c3] bg-[#fafafa] pr-[7px]">
        <input aria-label="编辑栏" defaultValue="12741.6" className="min-w-0 flex-1 bg-transparent pb-1.5 pl-[15px] outline-none" />
        <IconButton label="展开编辑栏">
          <Icon w={12} h={9}><path d="M1 1.500l5 5 5-5" stroke="#666" strokeWidth="3" /></Icon>
        </IconButton>
      </div>
    </div>
  )
}

const ROW_HEAD = "border-r border-b border-r-[#8f8f8f] border-b-[#c3c3c3] bg-[#e6e6e6] p-0 text-center align-bottom font-['Noto_Sans_CJK_SC',sans-serif] text-xl leading-6 font-light text-black"
const DATA_CELL = 'border-r border-b border-black p-0 whitespace-nowrap'

function Sheet() {
  return (
    <div className="flex min-h-0 flex-1">
      <div className="min-w-0 flex-1 overflow-hidden border-r border-[#8f8f8f] bg-[#fafafa]">
        <table className="w-[1649px] table-fixed border-separate border-spacing-0 text-[22px] leading-7 text-black">
          <colgroup>
            <col className="w-[41px]" />
            <col className="w-[132px]" />
            {MONTHS.map((m) => <col key={m} className="w-[123px]" />)}
          </colgroup>
          <thead>
            <tr className="h-7 bg-[#e6e6e6]">
              <th className="border-r border-b border-r-[#c3c3c3] border-b-[#8f8f8f] p-0" aria-label="全选">
                <Icon w={20} h={20} className="ml-[17px]"><path d="M20 0v20H0z" fill="#b8b8b8" /></Icon>
              </th>
              {COLUMNS.map((c) => (
                <th key={c} scope="col" className="border-r border-b border-r-[#bdbdbd] border-b-[#8f8f8f] p-0 pt-1 font-['Noto_Sans_CJK_SC',sans-serif] text-xl leading-[22px] font-light">
                  {c}
                </th>
              ))}
            </tr>
          </thead>
          <tbody>
            <tr className="h-[33px] bg-[#bbb] font-bold text-white">
              <th scope="row" className={ROW_HEAD}>1</th>
              <td className={`${DATA_CELL} pl-[3px]`}>产品名称</td>
              {MONTHS.map((m) => (
                <td key={m} className={`${DATA_CELL} pl-[11px] align-bottom`}>{m}</td>
              ))}
            </tr>
            {PRODUCTS.map((p, i) => (
              <tr key={p.name} className={`h-[33px] ${i % 2 === 0 ? 'bg-[#dbe9f6]' : ''}`}>
                <th scope="row" className={ROW_HEAD}>{i + 2}</th>
                <td className={`${DATA_CELL} pl-[3px]`}>{p.name}</td>
                {p.values.map((v, j) => (
                  <td key={j} className={`${DATA_CELL} pr-[11px] text-right align-bottom`}>{v}</td>
                ))}
                <td className={`${DATA_CELL} pl-[41px] align-bottom`}>{p.last}</td>
              </tr>
            ))}
            {EMPTY_ROWS.map((n) => (
              <tr key={n} className="h-[33px]">
                <th scope="row" className={ROW_HEAD}>{n}</th>
                {COLUMNS.map((c) => <td key={c} className="border-r border-b border-[#d4d4d4] p-0" />)}
              </tr>
            ))}
          </tbody>
        </table>
      </div>
      <div className="ml-[3px] flex w-[22px] flex-col bg-[#d4d4d4]">
        <IconButton label="向上滚动" className="h-[25px] border border-[#bbb] bg-[#fafafa]">
          <Icon w={12} h={6}><path d="M0 6h12L6 0z" fill="#666" /></Icon>
        </IconButton>
        <div className="h-[68px] border border-[#bbb] bg-[#fafafa]" />
        <IconButton label="向下滚动" className="mt-auto h-[25px] border border-[#bbb] bg-[#fafafa]">
          <Icon w={12} h={6}><path d="M0 0h12L6 6z" fill="#666" /></Icon>
        </IconButton>
      </div>
    </div>
  )
}

function SheetTabs() {
  return (
    <div className="flex h-[33px] shrink-0 border-t border-[#8f8f8f] text-xl">
      <div className="flex w-[113px] items-center">
        <IconButton label="上一个工作表" className="ml-7">
          <Icon w={6} h={12}><path d="M6 0v12L0 6z" fill="#bdbdbd" /></Icon>
        </IconButton>
        <IconButton label="下一个工作表" className="ml-7">
          <Icon w={6} h={12}><path d="M0 0v12l6-6z" fill="#bdbdbd" /></Icon>
        </IconButton>
      </div>
      <button type="button" className="mt-[3px] h-[26px] border-l border-[#8f8f8f] px-[11px] pb-1 leading-5 text-[#444]">透视列</button>
      <button type="button" className="-mt-px h-[31px] border-r border-b-2 border-l border-r-[#8f8f8f] border-b-[#217346] border-l-[#8f8f8f] bg-[#fafafa] px-[11px] text-[#217346]">
        逆透视
      </button>
      <IconButton label="新工作表" className="ml-[38px]">
        <Icon w={23} h={23}>
          <circle cx="11.500" cy="11.500" r="10.500" stroke="#757575" strokeWidth="1.300" />
          <path d="M6.500 11.500h10M11.500 6.500v10" stroke="#666" strokeWidth="2" />
        </Icon>
      </IconButton>
      <div className="mt-[3px] mr-[23px] ml-auto flex h-[26px] items-center">
        <Dots />
        <div className="ml-[18px] flex h-full w-[602px] bg-[#d4d4d4]">
          <IconButton label="向左滚动" className="w-[26px] border border-[#bbb] bg-[#fafafa]">
            <Icon w={6} h={12}><path d="M6 0v12L0 6z" fill="#666" /></Icon>
          </IconButton>
          <div className="w-[421px] border border-[#bbb] bg-[#fafafa]" />
          <IconButton label="向右滚动" className="ml-auto w-[26px] border border-[#bbb] bg-[#fafafa]">
            <Icon w={6} h={12}><path d="M0 0v12l6-6z" fill="#666" /></Icon>
          </IconButton>
        </div>
      </div>
    </div>
  )
}

function StatusBar() {
  return (
    <footer className="flex h-[27px] shrink-0 items-stretch border-t border-[#bdbdbd] bg-[#fafafa] font-['Noto_Sans_CJK_SC',sans-serif] text-[#333]">
      <IconButton label="录制宏" className="ml-[9px]">
        <Icon w={20} h={20}>
          <path d="M3.600 6v13.400h15.800V4" stroke="#666" strokeWidth="1.200" />
          <path d="M9 2h11v5H9z" fill="#666" />
          <circle cx="4.700" cy="4.700" r="4.700" fill="#666" />
          <path d="M6 10.500h12M6 13.500h12M6 16.500h12" stroke="#777" strokeDasharray="3 1" />
        </Icon>
      </IconButton>
      <button type="button" className="ml-7 flex items-center gap-1 pt-0.5 leading-6 whitespace-nowrap">
        <Icon w={22} h={23}>
          <path d="M6 2.500A9 9 0 0 0 6 19" stroke="#555" strokeWidth="1.500" strokeDasharray="3.500 1.500" />
          <path d="M8.500 1v8.500H19M16 6.500l3 3-3 3" stroke="#555" strokeWidth="1.600" />
          <path d="M9.500 13.500L20.500 22M19.500 12.500l-9.500 10" stroke="#555" strokeWidth="2.200" />
        </Icon>
        辅助功能: 调查
      </button>
      <div className="ml-auto flex">
        <IconButton label="普通" className="w-[60px] bg-[#c3c3c3]">
          <Icon w={20} h={20}><path d="M.7 .7h18.600v18.600H.7zM7 1v18M13 1v18M1 7h18M1 13h18" stroke="#666" strokeWidth="1.300" /></Icon>
        </IconButton>
        <IconButton label="页面布局" className="w-[60px]">
          <Icon w={20} h={20}>
            <path d="M.7 .7h18.600v18.600H.7zM4.700 3.700h10.600v12.600H4.700z" stroke="#666" strokeWidth="1.300" />
            <path d="M7 7h6M7 10h6M7 13h6" stroke="#666" strokeWidth="1.200" />
          </Icon>
        </IconButton>
        <IconButton label="分页预览" className="w-[60px]">
          <Icon w={20} h={20}><path d="M.7 .7h18.600v18.600H.7zM1 12h12V1M7 1v11" stroke="#666" strokeWidth="1.300" /></Icon>
        </IconButton>
      </div>
      <IconButton label="缩小" className="ml-2">
        <Icon w={12} h={12}><path d="M0 6h12" stroke="#333" strokeWidth="1.600" /></Icon>
      </IconButton>
      <input
        type="range"
        aria-label="显示比例"
        min={0}
        max={100}
        defaultValue={50}
        className="mx-2 my-auto h-[3px] w-[148px] appearance-none bg-[#bbb] [&::-webkit-slider-thumb]:h-[17px] [&::-webkit-slider-thumb]:w-2 [&::-webkit-slider-thumb]:appearance-none [&::-webkit-slider-thumb]:bg-[#6b6b6b]"
      />
      <IconButton label="放大">
        <Icon w={12} h={12}><path d="M0 6h12M6 0v12" stroke="#333" strokeWidth="1.300" /></Icon>
      </IconButton>
      <button type="button" className="mr-[23px] ml-[19px] pt-0.5 leading-6">100%</button>
    </footer>
  )
}

export default function App() {
  return (
    <div className="h-screen bg-[#e8eef1] pt-[3px] pr-0.5 pb-0.5 pl-[3px] font-['Noto_Sans','Noto_Sans_CJK_SC',sans-serif] text-lg">
      <div className="flex h-full flex-col overflow-hidden">
        <header className="shrink-0 border-x-2 border-t-2 border-[#1e5c3a] bg-[#217346]">
          <TitleBar />
          <TabBar />
        </header>
        <main className="flex min-h-0 flex-1 flex-col border-x-2 border-b-2 border-[#bcbfc1] bg-[#e6e6e6]">
          <Ribbon />
          <FormulaBar />
          <Sheet />
          <SheetTabs />
          <StatusBar />
        </main>
      </div>
    </div>
  )
}
